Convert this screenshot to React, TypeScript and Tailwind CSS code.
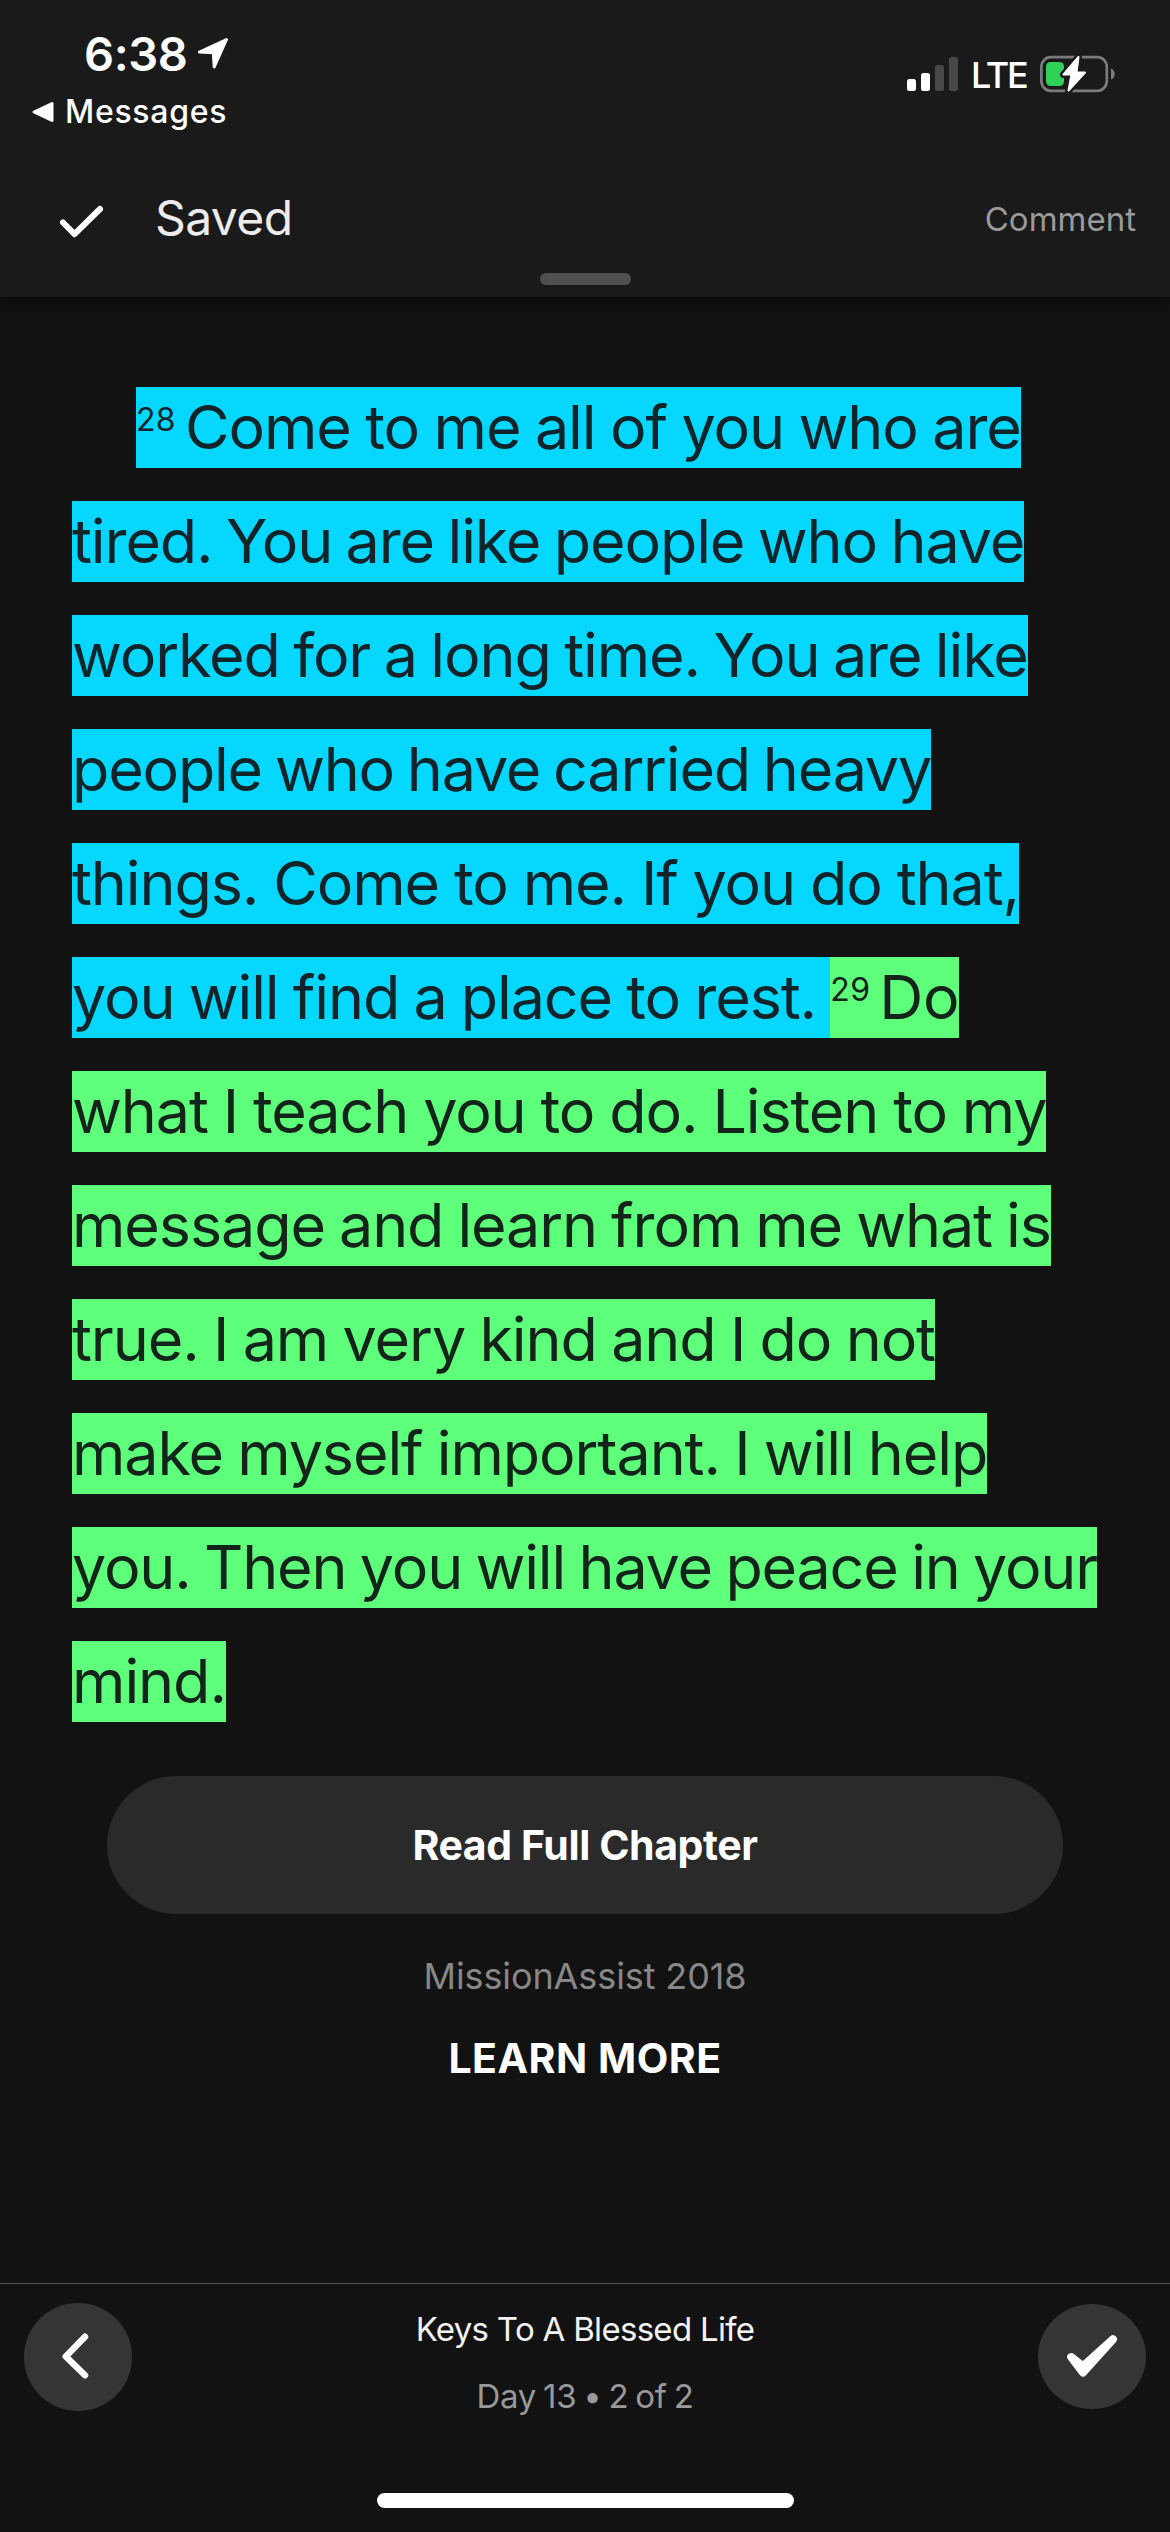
type Segment = {
  verse?: number;
  text: string;
  color: "blue" | "green";
  spacing: string;
};

const lines: Segment[][] = [
  [
    {
      verse: 28,
      text: "Come to me all of you who are",
      color: "blue",
      spacing: "tracking-[-1.1px] [word-spacing:-1.5px]",
    },
  ],
  [
    {
      text: "tired. You are like people who have",
      color: "blue",
      spacing: "tracking-[-1.1px] [word-spacing:-2.6px]",
    },
  ],
  [
    {
      text: "worked for a long time. You are like",
      color: "blue",
      spacing: "tracking-[-1.1px] [word-spacing:-2.6px]",
    },
  ],
  [
    {
      text: "people who have carried heavy",
      color: "blue",
      spacing: "tracking-[-1.2px] [word-spacing:-3px]",
    },
  ],
  [
    {
      text: "things. Come to me. If you do that,",
      color: "blue",
      spacing: "tracking-[-1.1px] [word-spacing:-1.1px]",
    },
  ],
  [
    {
      text: "you will find a place to rest. ",
      color: "blue",
      spacing: "tracking-[-1.1px] [word-spacing:-1.8px]",
    },
    {
      verse: 29,
      text: "Do",
      color: "green",
      spacing: "tracking-[-0.3px]",
    },
  ],
  [
    {
      text: "what I teach you to do. Listen to my",
      color: "green",
      spacing: "tracking-[-1.1px] [word-spacing:-1.1px]",
    },
  ],
  [
    {
      text: "message and learn from me what is",
      color: "green",
      spacing: "tracking-[-1.1px] [word-spacing:-2px]",
    },
  ],
  [
    {
      text: "true. I am very kind and I do not",
      color: "green",
      spacing: "tracking-[-1.1px] [word-spacing:-1.65px]",
    },
  ],
  [
    {
      text: "make myself important. I will help",
      color: "green",
      spacing: "tracking-[-1.1px] [word-spacing:-1.8px]",
    },
  ],
  [
    {
      text: "you. Then you will have peace in your",
      color: "green",
      spacing: "tracking-[-1.2px] [word-spacing:-2.4px]",
    },
  ],
  [{ text: "mind.", color: "green", spacing: "tracking-[-1.05px]" }],
];

const highlight = {
  blue: "bg-[#05d7ff] text-[#10242a]",
  green: "bg-[#5eff7a] text-[#13241a]",
};

function StatusBar() {
  return (
    <div className="flex h-[162px] justify-between">
      <div className="flex flex-col pt-[26px]">
        <div className="flex h-[54px] items-center pl-[84px]">
          <span className="text-[47px] leading-none font-semibold tracking-[-0.4px]">
            6:38
          </span>
          <svg
            width="34"
            height="34"
            viewBox="0 0 34 34"
            className="ml-[9px]"
            fill="white"
            stroke="white"
            strokeWidth="3"
            strokeLinejoin="round"
          >
            <path d="M30.5 3.5 L3.5 16 L17.3 16.8 L18.2 31 Z" />
          </svg>
        </div>
        <div className="mt-[12px] flex h-[40px] items-center pl-[32px]">
          <svg
            width="22"
            height="22"
            viewBox="0 0 22 22"
            fill="white"
            stroke="white"
            strokeWidth="3"
            strokeLinejoin="round"
          >
            <path d="M2 11 L20 2.5 V19.5 Z" />
          </svg>
          <span className="ml-[11px] text-[32px] leading-none font-medium tracking-[0.7px]">
            Messages
          </span>
        </div>
      </div>
      <div className="mt-[54px] flex h-[40px] items-center pr-[55px]">
        <svg width="51" height="34" viewBox="0 0 51 34">
          <rect x="0" y="22" width="9" height="12" rx="2.5" fill="white" />
          <rect x="14" y="16" width="9" height="18" rx="2.5" fill="white" />
          <rect x="28" y="8" width="9" height="26" rx="2.5" fill="#484848" />
          <rect x="42" y="0" width="9" height="34" rx="2.5" fill="#484848" />
        </svg>
        <span className="ml-[13px] w-[69px] pt-[2px] text-[36px] leading-none font-medium tracking-[-2.2px]">
          LTE
        </span>
        <svg width="75" height="40" viewBox="0 0 75 40">
          <rect
            x="1.4"
            y="3.2"
            width="65.4"
            height="33.6"
            rx="9.5"
            fill="none"
            stroke="#7b7b7b"
            strokeWidth="2.7"
          />
          <path d="M71 14.5 C76 16 76 24 71 25.5 Z" fill="#7b7b7b" />
          <rect x="6" y="8" width="18" height="24" rx="4.5" fill="#30d158" />
          <path
            d="M38.5 3 L23.5 20.5 H31.5 L28.5 36.5 L45 18.5 H36.5 Z"
            fill="#1a1a1a"
            stroke="#1a1a1a"
            strokeWidth="7"
            strokeLinejoin="round"
          />
          <path
            d="M38.5 3 L23.5 20.5 H31.5 L28.5 36.5 L45 18.5 H36.5 Z"
            fill="white"
            stroke="white"
            strokeWidth="2"
            strokeLinejoin="round"
          />
        </svg>
      </div>
    </div>
  );
}

function Header() {
  return (
    <header className="relative z-10 h-[297px] bg-[#1a1a1a] shadow-[0_4px_14px_rgba(0,0,0,0.55)]">
      <StatusBar />
      <div className="flex h-[111px] items-center pr-[34px] pl-[58px]">
        <svg
          width="48"
          height="40"
          viewBox="0 0 48 40"
          fill="none"
          stroke="white"
          strokeWidth="6"
          strokeLinecap="round"
          strokeLinejoin="round"
          className="mt-[8px]"
        >
          <path d="M5 20.5 L16.5 32.2 L42 7" />
        </svg>
        <span className="ml-[49px] pt-px text-[48px] leading-none tracking-[-0.6px] text-[#ececec]">
          Saved
        </span>
        <span className="ml-auto pt-[4px] text-[33px] leading-none text-[#9a9a9a]">
          Comment
        </span>
      </div>
      <div className="mx-auto h-[12px] w-[91px] rounded-full bg-[#4f4f4f]" />
    </header>
  );
}

function Passage() {
  return (
    <div className="flex flex-col gap-[33px] pl-[72px]">
      {lines.map((line, i) => (
        <p key={i} className={i === 0 ? "flex h-[81px] pl-[64px]" : "flex h-[81px]"}>
          {line.map((seg) => (
            <span key={seg.text} className={`flex ${highlight[seg.color]}`}>
              {seg.verse && (
                <sup className="top-0 block w-[49px] text-[32px] leading-[65px] tracking-[0.3px]">
                  {seg.verse}
                </sup>
              )}
              <span
                className={`text-[61px] leading-[81px] whitespace-pre ${seg.spacing}`}
              >
                {seg.text}
              </span>
            </span>
          ))}
        </p>
      ))}
    </div>
  );
}

function Footer() {
  return (
    <footer className="flex h-[249px] flex-col items-center border-t border-[#555555]">
      <div className="flex w-full justify-between px-[24px] pt-[19px]">
        <button className="size-[108px] rounded-full bg-[#353535]">
          <svg
            width="108"
            height="108"
            viewBox="0 0 108 108"
            fill="none"
            stroke="white"
            strokeWidth="6.5"
            strokeLinecap="round"
            strokeLinejoin="round"
          >
            <path d="M61 33.8 L41.8 53.5 L61 72.3" />
          </svg>
        </button>
        <div className="flex flex-col items-center pt-[6px]">
          <span className="h-[40px] text-[33px] leading-[40px] tracking-[-0.7px] text-[#f2f2f2]">
            Keys To A Blessed Life
          </span>
          <span className="mt-[27px] h-[40px] text-[33px] leading-[40px] tracking-[-0.3px] [word-spacing:-2px] text-[#999999]">
            Day 13 • 2 of 2
          </span>
        </div>
        <button className="mt-px h-[105px] w-[108px] rounded-[50%] bg-[#353535]">
          <svg
            width="108"
            height="105"
            viewBox="0 0 108 105"
            fill="white"
            stroke="white"
            strokeWidth="8"
            strokeLinejoin="round"
          >
            <path d="M33.2 53 L45 62.3 L75 35.2 L45 68.5 Z" />
          </svg>
        </button>
      </div>
      <div className="mt-[77px] h-[15px] w-[417px] rounded-full bg-white" />
    </footer>
  );
}

export default function App() {
  return (
    <div className="flex h-[2532px] w-[1170px] flex-col overflow-hidden bg-[#121212] font-['Inter',sans-serif] text-white">
      <Header />
      <main className="flex flex-1 flex-col pt-[90px]">
        <Passage />
        <button className="mx-[107px] mt-[54px] h-[138px] rounded-full bg-[#2a2a2a] text-[41px] leading-none font-bold tracking-[-0.4px]">
          Read Full Chapter
        </button>
        <p className="mt-[40px] text-center text-[36px] leading-[44px] tracking-[-0.1px] text-[#878787]">
          MissionAssist 2018
        </p>
        <a className="mt-[35px] text-center text-[41px] leading-[50px] font-bold tracking-[0.5px]">
          LEARN MORE
        </a>
      </main>
      <Footer />
    </div>
  );
}
